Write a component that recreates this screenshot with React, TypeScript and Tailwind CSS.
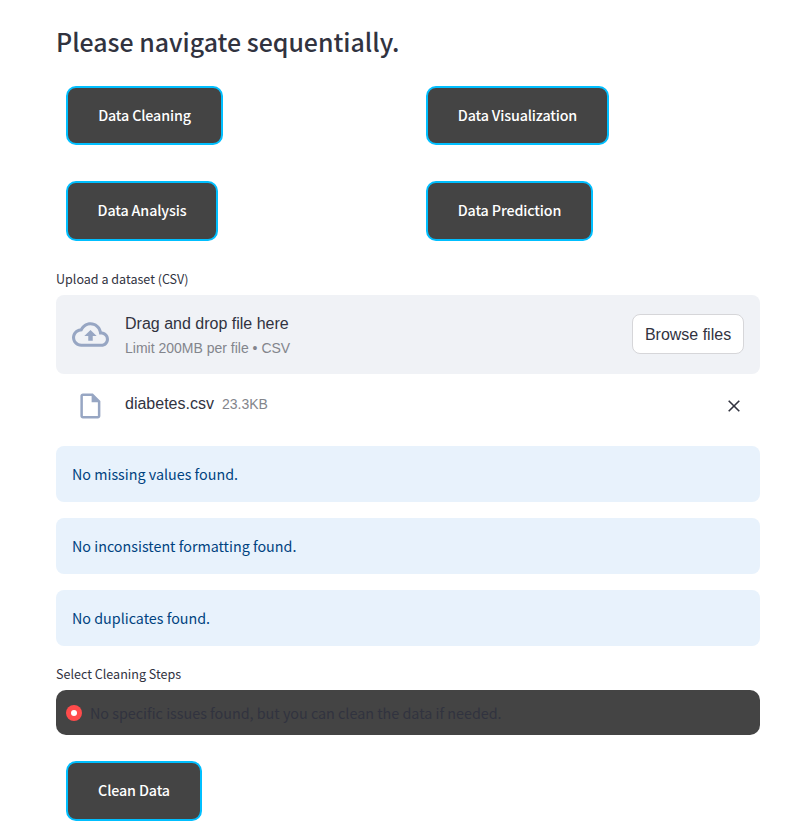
import type { ReactNode } from "react";

const SOURCE = "font-['Noto_Sans_CJK_SC','Noto_Sans',sans-serif]";

function StepButton({ children, className }: { children: ReactNode; className: string }) {
  return (
    <button
      className={`ml-[10px] flex items-center justify-center rounded-[10px] border-2 border-[#00bfff] bg-[#444444] pb-0.5 text-[14.3px] font-medium leading-6 tracking-[-0.14px] text-white ${className}`}
    >
      {children}
    </button>
  );
}

function Notice({ children }: { children: ReactNode }) {
  return (
    <div className="flex h-14 items-center rounded-lg bg-[#e8f2fc] px-4 text-[14.32px] leading-6 text-[#004280]">
      <span className="pb-px">{children}</span>
    </div>
  );
}

export default function App() {
  return (
    <main className={`h-[823px] w-[794px] overflow-hidden bg-white pl-14 pr-[34px] text-[#31333f] ${SOURCE}`}>
      <h3 className="flex h-[86px] items-center pb-1 text-[24.9px] font-medium leading-[34px]">
        Please navigate sequentially.
      </h3>

      <section className="grid grid-cols-[360px_344px] grid-rows-[59px_60px] gap-y-9">
        <StepButton className="h-[59px] w-[157px]">Data Cleaning</StepButton>
        <StepButton className="h-[59px] w-[183px]">Data Visualization</StepButton>
        <StepButton className="h-[60px] w-[152px]">Data Analysis</StepButton>
        <StepButton className="h-[60px] w-[167px]">Data Prediction</StepButton>
      </section>

      <p className="mt-[27px] h-[27px] text-[12.55px] leading-[22px]">Upload a dataset (CSV)</p>

      <section className="flex h-[79px] items-center rounded-lg bg-[#f0f2f6] px-4 font-['Liberation_Sans',Arial,sans-serif]">
        <svg className="mr-4 size-[37px] shrink-0 text-[#97a6c3]" viewBox="0 0 24 24" fill="currentColor">
          <path d="M19.35 10.04C18.67 6.59 15.64 4 12 4 9.11 4 6.6 5.64 5.35 8.04 2.34 8.36 0 10.91 0 14c0 3.31 2.69 6 6 6h13c2.76 0 5-2.24 5-5 0-2.64-2.05-4.78-4.65-4.96zM19 18H6c-2.21 0-4-1.79-4-4 0-2.05 1.53-3.76 3.56-3.97l1.07-.11.5-.95C8.08 7.14 9.94 6 12 6c2.62 0 4.88 1.86 5.39 4.43l.3 1.5 1.53.11c1.56.1 2.78 1.41 2.78 2.96 0 1.65-1.35 3-3 3zM8 13h2.55v3h2.9v-3H16l-4-4z" />
        </svg>
        <div className="flex-1">
          <p className="text-base leading-[26px]">Drag and drop file here</p>
          <p className="text-sm leading-[22px] text-[#83858c]">Limit 200MB per file • CSV</p>
        </div>
        <button className="mb-px h-10 w-28 rounded-lg border border-[#d6d6d9] bg-white pt-0.5 text-base leading-6">
          Browse files
        </button>
      </section>

      <div className="flex h-[72px] items-start pl-[19px] pr-5 pt-[17px] font-['Liberation_Sans',Arial,sans-serif]">
        <svg className="mr-5 size-[30px] shrink-0 text-[#97a6c3]" viewBox="-0.3 0 24 24" fill="currentColor">
          <path d="M14 2H6c-1.1 0-1.99.9-1.99 2L4 20c0 1.1.89 2 1.99 2H18c1.1 0 2-.9 2-2V8l-6-6zM6 20V4h7v5h5v11H6z" />
        </svg>
        <span className="text-base leading-[26px]">diabetes.csv</span>
        <span className="ml-2 flex-1 text-sm leading-[26px] text-[#83858c]">23.3KB</span>
        <button className="mt-[9px]" aria-label="Remove file">
          <svg className="size-3" viewBox="0 0 12 12" fill="none" stroke="#31333f" strokeWidth="1.6">
            <path d="M.7.7l10.6 10.6M11.3.7L.7 11.3" />
          </svg>
        </button>
      </div>

      <section className="flex flex-col gap-4">
        <Notice>No missing values found.</Notice>
        <Notice>No inconsistent formatting found.</Notice>
        <Notice>No duplicates found.</Notice>
      </section>

      <p className="mt-[17px] h-[27px] text-[12.55px] leading-[22px]">Select Cleaning Steps</p>
      <label className="flex h-[45px] items-center rounded-[10px] bg-[#444444] pl-[10px] text-[14.34px] leading-6">
        <span className="mr-2 flex size-4 items-center justify-center rounded-full bg-[#ff4b4b]">
          <span className="size-1.5 rounded-full bg-white" />
        </span>
        <span className="pt-px">No specific issues found, but you can clean the data if needed.</span>
      </label>

      <div className="pt-[26px]">
        <StepButton className="h-[60px] w-[136px]">Clean Data</StepButton>
      </div>
    </main>
  );
}
